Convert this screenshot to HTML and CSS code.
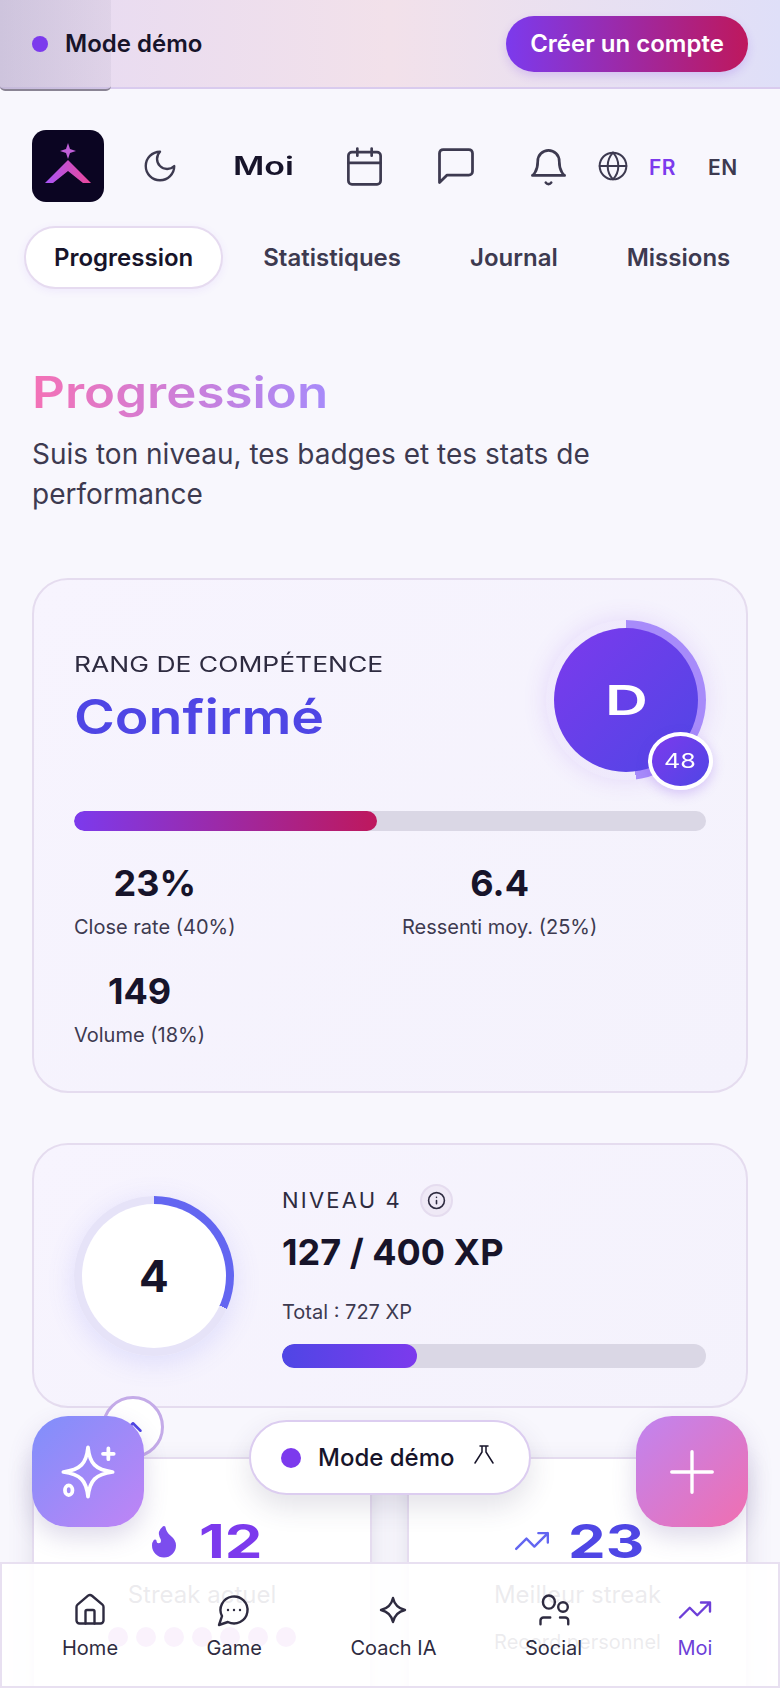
FILE: index.html
```html
<!DOCTYPE html>
<html lang="fr">
<head>
   <meta charset="UTF-8">
   <title>Progression</title>
   <link rel="stylesheet" href="styles.css">
</head>
<body>
<div class="demo-bar">
   <div class="demo-status"><span class="dot"></span>Mode démo</div>
   <button class="signup-btn">Créer un compte</button>
</div>
<div class="corner-box"></div>

<header class="top-nav">
   <div class="logo">
      <svg viewBox="0 0 72 72" width="72" height="72">
         <defs>
            <linearGradient id="logoGrad" x1="0" y1="0" x2="1" y2="0">
               <stop offset="0" stop-color="#a855f7"/>
               <stop offset="1" stop-color="#ec4899"/>
            </linearGradient>
         </defs>
         <path d="M36 13l2 6 6 2-6 2-2 6-2-6-6-2 6-2z" fill="#c05fd8"/>
         <path d="M36 30L59 53H51L36 41 21 53H13z" fill="url(#logoGrad)"/>
      </svg>
   </div>
   <button class="icon-btn moon"><svg viewBox="0 0 24 24"><path d="M12 3a6 6 0 0 0 9 9 9 9 0 1 1-9-9Z"/></svg></button>
   <a class="moi-link"><span class="wide">Moi</span></a>
   <button class="icon-btn"><svg viewBox="0 0 24 24"><path d="M8 2v4M16 2v4M3 10h18"/><rect x="3" y="4" width="18" height="18" rx="2"/></svg></button>
   <button class="icon-btn chat"><svg viewBox="0 0 24 24"><path d="M21 15a2 2 0 0 1-2 2H7l-4 4V5a2 2 0 0 1 2-2h14a2 2 0 0 1 2 2z"/></svg></button>
   <button class="icon-btn"><svg viewBox="0 0 24 24"><path d="M6 9a6 6 0 0 1 12 0c0 6 3 8 3 8H3s3-2 3-8"/><path d="M10.500 21a1.800 1.800 0 0 0 3 0"/></svg></button>
   <button class="globe"><svg viewBox="0 0 24 24"><circle cx="12" cy="12" r="10"/><path d="M12 2a14.500 14.500 0 0 0 0 20 14.500 14.500 0 0 0 0-20M2 12h20"/></svg></button>
   <span class="lang active">FR</span>
   <span class="lang">EN</span>
</header>

<nav class="tabs">
   <a class="tab active">Progression</a>
   <a class="tab">Statistiques</a>
   <a class="tab">Journal</a>
   <a class="tab">Missions</a>
</nav>

<main class="content">
   <h1 class="page-title"><span class="wide">Progression</span></h1>
   <p class="page-sub">Suis ton niveau, tes badges et tes stats de performance</p>

   <section class="card rank-card">
      <div class="rank-top">
         <div class="rank-text">
            <div class="rank-label"><span class="wide-light">RANG DE COMPÉTENCE</span></div>
            <div class="rank-name"><span class="wide">Confirmé</span></div>
         </div>
         <div class="rank-ring">
            <div class="rank-disc"><span class="wide">D</span></div>
            <div class="rank-badge"><span class="wide-light">48</span></div>
         </div>
      </div>
      <div class="bar bar-rank"><div class="bar-fill fill-rank"></div></div>
      <div class="stats">
         <div class="stat"><strong>23%</strong><span>Close rate (40%)</span></div>
         <div class="stat"><strong>6.4</strong><span>Ressenti moy. (25%)</span></div>
         <div class="stat"><strong>149</strong><span>Volume (18%)</span></div>
      </div>
   </section>

   <section class="card level-card">
      <div class="level-ring"><div class="level-disc">4</div></div>
      <div class="level-info">
         <div class="level-label">NIVEAU 4
            <span class="info-btn"><svg viewBox="0 0 24 24"><circle cx="12" cy="12" r="10"/><path d="M12 16v-4M12 8h.01"/></svg></span>
         </div>
         <div class="level-xp">127 / 400 XP</div>
         <div class="level-total">Total : 727 XP</div>
         <div class="bar bar-level"><div class="bar-fill fill-level"></div></div>
      </div>
   </section>

   <div class="streak-grid">
      <section class="streak-card">
         <div class="streak-value">
            <svg class="flame" viewBox="0 0 24 24"><path d="M8.500 14.500A2.500 2.500 0 0 0 11 12c0-1.380-.5-2-1-3-1.072-2.143-.224-4.054 2-6 .5 2.500 2 4.900 4 6.500 2 1.600 3 3.500 3 5.500a7 7 0 1 1-14 0c0-1.153.433-2.294 1-3a2.500 2.500 0 0 0 2.500 2.500z"/></svg>
            <span class="streak-num num-12 purple"><span class="wide">12</span></span>
         </div>
         <div class="streak-label">Streak actuel</div>
         <div class="streak-dots"><i></i><i></i><i></i><i></i><i></i><i></i><i></i></div>
      </section>
      <section class="streak-card">
         <div class="streak-value">
            <svg class="trend" viewBox="0 0 24 24"><path d="M22 7l-8.500 8.500-5-5L2 17M16 7h6v6"/></svg>
            <span class="streak-num num-23 indigo"><span class="wide">23</span></span>
         </div>
         <div class="streak-label">Meilleur streak</div>
         <div class="streak-note">Record personnel</div>
      </section>
   </div>
</main>

<button class="scroll-btn"><svg viewBox="0 0 24 24"><path d="M6 15l6-6 6 6"/></svg></button>
<button class="fab fab-left">
   <svg viewBox="0 0 56 56"><path d="M28 5c1.500 15 7 21 23 23-16 2-21.500 8-23 23-1.500-15-7-21-23-23 16-2 21.500-8 23-23z"/><path d="M47 6v10M42 11h10"/><ellipse cx="10" cy="45" rx="3.500" ry="4.500"/></svg>
</button>
<button class="fab fab-right"><svg viewBox="0 0 24 24"><path d="M12 3v18M3 12h18"/></svg></button>
<div class="demo-pill">
   <span class="dot dot-big"></span>Mode démo
   <svg viewBox="0 0 24 24"><path d="M8 3h8M10 3v6L3 20M14 3v6l7 11"/></svg>
</div>

<nav class="bottom-nav">
   <a class="nav-item">
      <svg viewBox="0 0 24 24"><path d="M15 21v-8a1 1 0 0 0-1-1h-4a1 1 0 0 0-1 1v8"/><path d="M3 10a2 2 0 0 1 .709-1.528l7-5.999a2 2 0 0 1 2.582 0l7 5.999A2 2 0 0 1 21 10v9a2 2 0 0 1-2 2H5a2 2 0 0 1-2-2z"/></svg>
      Home
   </a>
   <a class="nav-item">
      <svg viewBox="0 0 24 24"><path d="M7.900 20A9 9 0 1 0 4 16.100L2 22Z"/><path d="M8 12h.01M12 12h.01M16 12h.01"/></svg>
      Game
   </a>
   <a class="nav-item">
      <svg viewBox="0 0 24 24"><path d="M12 4c1 4.500 3.500 7 8 8-4.500 1-7 3.500-8 8-1-4.500-3.500-7-8-8 4.500-1 7-3.500 8-8z"/></svg>
      Coach IA
   </a>
   <a class="nav-item">
      <svg viewBox="0 0 24 24"><ellipse cx="8.600" cy="6.700" rx="4" ry="4.400"/><circle cx="18" cy="10" r="3.200"/><path d="M9.500 17H5a2 2 0 0 0-2 2v2.500M16 17h3.500a2 2 0 0 1 2 2v2.500"/></svg>
      Social
   </a>
   <a class="nav-item active">
      <svg viewBox="0 0 24 24"><path d="M22 7l-8.500 8.500-5-5L2 17M16 7h6v6"/></svg>
      Moi
   </a>
</nav>
</body>
</html>
```

FILE: styles.css
```css
* {
   box-sizing: border-box;
}

html, body {
   margin: 0;
   height: 1688px;
   overflow: hidden;
}

body {
   background: #f8f7fd;
   color: #17142a;
   font-family: Inter, "Liberation Sans", sans-serif;
   position: relative;
}

button {
   font-family: inherit;
   border: 0;
   background: none;
   padding: 0;
}

svg {
   fill: none;
   stroke: currentColor;
   stroke-width: 2;
   stroke-linecap: round;
   stroke-linejoin: round;
}

/* stretched look for the display font */
.wide, .wide-light {
   display: inline-block;
   transform-origin: left center;
   white-space: nowrap;
}

.wide {
   font-weight: 600;
   transform: scaleX(1.22);
}

.wide-light {
   transform: scaleX(1.26);
}

/* demo bar */
.demo-bar {
   height: 89px;
   display: flex;
   align-items: center;
   justify-content: space-between;
   padding: 0 32px;
   background: linear-gradient(90deg, #e6daf3 0%, #f2e1ea 50%, #dfdff8 100%);
   border-bottom: 2px solid #d9cbee;
}

.demo-status {
   display: flex;
   align-items: center;
   gap: 17px;
   font-size: 24px;
   font-weight: 600;
   position: relative;
   z-index: 1;
}

.dot {
   width: 16px;
   height: 16px;
   border-radius: 50%;
   background: #7c3aed;
}

.signup-btn {
   width: 242px;
   height: 56px;
   border-radius: 28px;
   color: #fff;
   font-size: 24px;
   font-weight: 600;
   background: linear-gradient(90deg, #7c3aed, #be185d);
   box-shadow: 0 4px 10px rgba(124, 58, 237, .2);
}

.corner-box {
   position: absolute;
   left: 0;
   top: 0;
   width: 111px;
   height: 91px;
   border-radius: 0 0 5px 5px;
   border-bottom: 2px solid #8a8494;
   background: linear-gradient(90deg, rgba(150, 145, 170, .3), rgba(150, 145, 170, .12));
}

/* header */
.top-nav {
   display: flex;
   align-items: center;
   height: 72px;
   margin-top: 41px;
   padding-left: 32px;
   color: #3d3a50;
}

.logo {
   width: 72px;
   height: 72px;
   border-radius: 14px;
   background: #0b0522;
   overflow: hidden;
}

.logo svg {
   stroke: none;
   display: block;
}

.icon-btn {
   width: 56px;
   height: 56px;
   margin-left: 36px;
   color: #3d3a50;
   display: flex;
   align-items: center;
   justify-content: center;
}

.icon-btn svg {
   width: 43px;
   height: 43px;
   stroke-width: 1.500;
}

.icon-btn.moon {
   margin-left: 28px;
}

.icon-btn.moon svg {
   width: 38px;
   height: 38px;
   stroke-width: 1.500;
}

.icon-btn.chat svg {
   width: 44px;
   height: 44px;
}

.moi-link {
   margin: 0 0 0 45px;
   width: 59px;
   font-size: 25px;
   color: #17142a;
}

.moi-link .wide {
   transform: scaleX(1.36);
}

.moi-link + .icon-btn {
   margin-left: 44px;
}

.globe {
   width: 32px;
   height: 32px;
   margin-left: 21px;
   color: #3d3a50;
}

.globe svg {
   width: 32px;
   height: 32px;
   display: block;
   stroke-width: 1.500;
}

.lang {
   font-size: 21px;
   font-weight: 600;
   letter-spacing: .5px;
   margin-left: 32px;
   padding-top: 2px;
   color: #3d3a50;
}

.globe + .lang {
   margin-left: 20px;
}

.lang.active {
   color: #7c3aed;
}

/* tabs */
.tabs {
   display: flex;
   align-items: center;
   gap: 11px;
   margin: 24px 0 0 24px;
   white-space: nowrap;
}

.tab {
   height: 63px;
   line-height: 59px;
   padding: 0 27px;
   font-size: 24px;
   font-weight: 600;
   color: #3d3a50;
   border: 2px solid transparent;
   border-radius: 32px;
}

.tab.active {
   padding: 0 28px;
   color: #17142a;
   background: #fff;
   border-color: #e6dbf0;
   box-shadow: 0 2px 8px rgba(124, 58, 237, .08);
}

/* page */
.content {
   padding: 0 32px;
}

.page-title {
   margin: 76px 0 0;
   font-size: 44px;
   line-height: 54px;
}

.page-title .wide {
   transform: scaleX(1.16);
   background: linear-gradient(90deg, #f472b6, #a78bfa);
   background-clip: text;
   -webkit-background-clip: text;
   color: transparent;
}

.page-sub {
   margin: 15px 0 0;
   font-size: 28px;
   line-height: 40px;
   color: #3d3a50;
}

.card {
   border: 2px solid #e5dcef;
   border-radius: 36px;
   background: linear-gradient(135deg, #f7f4fe, #f4f2fc);
}

.rank-card {
   height: 515px;
   margin-top: 64px;
   padding: 40px 40px 0;
}

.rank-top {
   display: flex;
   justify-content: space-between;
}

.rank-text {
   padding-top: 30px;
}

.rank-label {
   font-size: 21px;
   line-height: 30px;
   color: #2e2b40;
}

.rank-name {
   margin-top: 8px;
   font-size: 48px;
   line-height: 58px;
   color: #4f46e5;
}

.rank-name .wide {
   transform: scaleX(1.155);
}

.rank-ring {
   position: relative;
   width: 160px;
   height: 160px;
   border-radius: 50%;
   background: conic-gradient(#a78bfa 48%, rgba(124, 58, 237, .05) 0);
   box-shadow: 0 0 24px rgba(124, 58, 237, .14);
   display: flex;
   align-items: center;
   justify-content: center;
}

.rank-disc {
   width: 144px;
   height: 144px;
   border-radius: 50%;
   background: linear-gradient(135deg, #7c3aed, #4f46e5);
   color: #fff;
   font-size: 41px;
   display: flex;
   align-items: center;
   justify-content: center;
   padding-right: 12px;
}

.rank-disc .wide {
   transform: scaleX(1.45);
}

.rank-badge {
   position: absolute;
   right: -7px;
   bottom: -10px;
   width: 65px;
   height: 58px;
   border-radius: 50%;
   border: 4px solid #fff;
   background: linear-gradient(135deg, #7c3aed, #4f46e5);
   color: #fff;
   font-size: 20px;
   display: flex;
   align-items: center;
   justify-content: center;
   padding-right: 8px;
   box-shadow: 0 4px 12px rgba(124, 58, 237, .25);
}

.bar {
   background: #dad7e5;
   border-radius: 12px;
   overflow: hidden;
}

.bar-fill {
   height: 100%;
   border-radius: 12px;
}

.bar-rank {
   height: 20px;
   margin-top: 31px;
}

.fill-rank {
   width: 48%;
   background: linear-gradient(90deg, #7c3aed, #be185d);
}

.stats {
   display: grid;
   grid-template-columns: 1fr 1fr;
   column-gap: 24px;
   row-gap: 29px;
   margin-top: 29px;
   justify-items: start;
}

.stat {
   display: flex;
   flex-direction: column;
   align-items: center;
}

.stat strong {
   font-size: 36px;
   line-height: 46px;
   font-weight: 700;
}

.stat span {
   font-size: 20px;
   line-height: 24px;
   margin-top: 9px;
   color: #3d3a50;
}

.level-card {
   height: 265px;
   margin-top: 50px;
   padding: 0 40px;
   display: flex;
   align-items: center;
   gap: 48px;
}

.level-ring {
   flex: none;
   width: 160px;
   height: 160px;
   border-radius: 50%;
   background: conic-gradient(#6366f1 31.75%, #e6e3f8 0);
   box-shadow: 0 6px 28px rgba(99, 102, 241, .16);
   display: flex;
   align-items: center;
   justify-content: center;
}

.level-disc {
   width: 144px;
   height: 144px;
   border-radius: 50%;
   background: #fff;
   font-size: 44px;
   font-weight: 700;
   display: flex;
   align-items: center;
   justify-content: center;
}

.level-info {
   flex: 1;
}

.level-label {
   display: flex;
   align-items: center;
   gap: 18px;
   font-size: 22px;
   letter-spacing: 2.200px;
   color: #2e2b40;
   height: 34px;
}

.info-btn {
   width: 33px;
   height: 33px;
   border-radius: 50%;
   background: #efe9f6;
   border: 2px solid #e5dcef;
   display: flex;
   align-items: center;
   justify-content: center;
}

.info-btn svg {
   width: 19px;
   height: 19px;
}

.level-xp {
   margin-top: 13px;
   font-size: 36px;
   line-height: 44px;
   font-weight: 700;
}

.level-total {
   margin-top: 24px;
   font-size: 20px;
   line-height: 28px;
   color: #3d3a50;
}

.bar-level {
   height: 24px;
   margin-top: 18px;
}

.fill-level {
   width: 31.75%;
   background: linear-gradient(90deg, #4f46e5, #7c3aed);
}

.streak-grid {
   display: grid;
   grid-template-columns: 340px 341px;
   gap: 35px;
   margin-top: 49px;
}

.streak-card {
   height: 300px;
   border: 2px solid #e5dcef;
   border-radius: 0;
   background: #fff;
   box-shadow: 0 8px 24px rgba(60, 50, 90, .12);
   padding-top: 54px;
   text-align: center;
}

.streak-value {
   display: flex;
   align-items: center;
   justify-content: center;
   gap: 17px;
   height: 56px;
}

.flame {
   width: 36px;
   height: 36px;
   fill: #7c4dee;
   stroke: #7c4dee;
}

.trend {
   width: 38px;
   height: 38px;
   color: #6366f1;
   stroke-width: 1.500;
}

.streak-num {
   font-size: 46px;
   text-align: left;
}

.num-12 {
   width: 60px;
}

.num-23 {
   width: 74px;
}

.streak-num .wide {
   font-weight: 700;
   transform: scaleX(1.3);
}

.purple {
   color: #7c3aed;
}

.indigo {
   color: #4f46e5;
}

.streak-label {
   margin-top: 6px;
   font-size: 24px;
   line-height: 40px;
   color: #3d3a50;
}

.streak-dots {
   display: flex;
   justify-content: center;
   gap: 8px;
   margin-top: 12px;
}

.streak-dots i {
   width: 20px;
   height: 20px;
   border-radius: 50%;
   background: #c77fe0;
}

.streak-note {
   margin-top: 15px;
   font-size: 20px;
   color: #3d3a50;
}

/* floating things */
.scroll-btn {
   position: absolute;
   left: 102px;
   top: 1396px;
   width: 62px;
   height: 62px;
   border-radius: 50%;
   background: #fff;
   border: 3px solid #c4abe8;
   color: #4f46e5;
}

.scroll-btn svg {
   width: 30px;
   height: 30px;
   display: block;
   margin: auto;
}

.fab {
   position: absolute;
   top: 1416px;
   width: 112px;
   height: 111px;
   border-radius: 36px;
   color: #fff;
   display: flex;
   align-items: center;
   justify-content: center;
   box-shadow: 0 10px 24px rgba(90, 70, 150, .2);
}

.fab-left {
   left: 32px;
   background: linear-gradient(135deg, #7f8ffb, #c084f5);
}

.fab-left svg {
   width: 60px;
   height: 60px;
   stroke-width: 3.500;
}

.fab-right {
   left: 636px;
   background: linear-gradient(135deg, #c084f0, #f06fb0);
}

.fab-right svg {
   width: 54px;
   height: 54px;
   stroke-width: 1.500;
}

.demo-pill {
   position: absolute;
   left: 249px;
   top: 1420px;
   width: 282px;
   height: 75px;
   border-radius: 38px;
   background: #fff;
   border: 2px solid #dccdf0;
   display: flex;
   align-items: center;
   padding-left: 30px;
   font-size: 24px;
   font-weight: 500;
   box-shadow: 0 12px 28px rgba(60, 50, 90, .14);
}

.dot-big {
   width: 20px;
   height: 20px;
   margin-right: 17px;
}

.demo-pill svg {
   width: 24px;
   height: 24px;
   margin: -6px 0 0 18px;
   stroke-width: 1.500;
}

.bottom-nav {
   position: absolute;
   left: 0;
   right: 0;
   top: 1562px;
   height: 126px;
   display: flex;
   gap: 88.500px;
   padding: 28px 65px 0 60px;
   background: rgba(255, 255, 255, .9);
   border: 2px solid #e8e0f1;
}

.nav-item {
   display: flex;
   flex-direction: column;
   align-items: center;
   font-size: 20px;
   color: #2e2b40;
}

.nav-item svg {
   width: 36px;
   height: 36px;
   margin-bottom: 8px;
   stroke-width: 1.600;
}

.nav-item.active {
   color: #6d3fd8;
   margin-left: auto;
}
```
